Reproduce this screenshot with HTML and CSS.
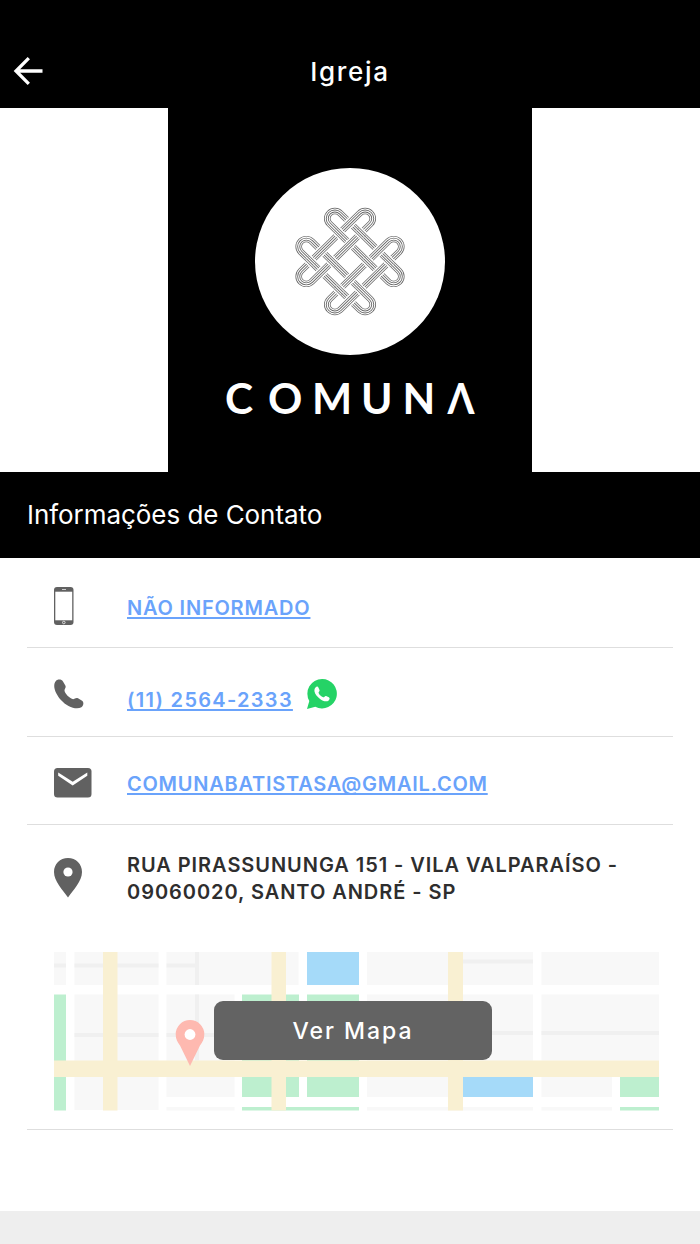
FILE: index.html
```html
<!DOCTYPE html>
<html lang="pt-BR">
<head>
  <meta charset="UTF-8" />
  <meta name="viewport" content="width=device-width, initial-scale=1.0"/>
  <title>Igreja</title>
  <link rel="stylesheet" href="styles.css">
</head>
<body>

  <header class="header">
    <a class="back" href="#" aria-label="Voltar">
      <svg width="30" height="30" viewBox="0 0 30 30">
        <path d="M15.800 1.200 3 14l12.800 12.800M3 14h26.500" fill="none" stroke="#fff" stroke-width="3.300"/>
      </svg>
    </a>
    <h1>Igreja</h1>
  </header>

  <!-- Logo -->
  <div class="hero">
    <svg class="logo" width="364" height="364" viewBox="0.5 0 364 364">
      <defs>
        <g id="ovalH">
          <rect x="-49.700" y="-28.100" width="99.400" height="15.400" rx="7.700"/>
          <rect x="-49.700" y="12.700" width="99.400" height="15.400" rx="7.700"/>
        </g>
        <g id="ovals">
          <use href="#ovalH" stroke="#fff" stroke-width="9.600"/>
          <use href="#ovalH" stroke="#666" stroke-width="6.600"/>
          <use href="#ovalH" stroke="#fff" stroke-width="5.100"/>
          <use href="#ovalH" stroke="#666" stroke-width="3"/>
          <use href="#ovalH" stroke="#fff" stroke-width="1.200"/>
        </g>
        <clipPath id="over">
          <path d="M-17.700-33.100h10v10h-10zM23.100-33.100h10v10h-10zM-33.100-17.700h10v10h-10zM7.700-17.700h10v10h-10zM-17.700 7.700h10v10h-10zM23.100 7.700h10v10h-10zM-33.100 23.100h10v10h-10zM7.700 23.100h10v10h-10z"/>
        </clipPath>
      </defs>
      <ellipse cx="182.500" cy="153.500" rx="95" ry="93.500" fill="#fff"/>
      <g transform="translate(182.500 153.500) scale(.99 .975) rotate(45)" fill="none">
        <use href="#ovals"/>
        <use href="#ovals" transform="rotate(90)"/>
        <g clip-path="url(#over)"><use href="#ovals"/></g>
      </g>
      <g class="brand">
        <text x="57.500 100.500 144.500 193.500 235" y="305.500">COMUN</text>
        <text x="280" y="305.500" textLength="27" lengthAdjust="spacingAndGlyphs">Λ</text>
      </g>
    </svg>
  </div>

  <h2>Informações de Contato</h2>

  <main class="contacts">
    <div class="row row-mobile">
      <span class="icon">
        <svg width="20" height="38" viewBox="0 0 20 38">
          <rect width="19.500" height="38" rx="3" fill="#616161"/>
          <path d="M1.300 4.700h16.900v28.600H1.300z" fill="#fff"/>
          <path d="M8 2.500h4" stroke="#ccc"/>
          <circle cx="9.800" cy="35.500" r="1.300" fill="none" stroke="#ddd"/>
        </svg>
      </span>
      <a href="#">NÃO INFORMADO</a>
    </div>

    <div class="row row-phone">
      <span class="icon">
        <svg width="30" height="30" viewBox="0 0 30 30">
          <path d="M1.500 2.500C3 .2 7.300-.2 9 2.500l2.200 3.700c1.400 2.300-.8 3.400-.7 5.400.2 2.900 5.200 8 8 8.500 2.100.4 3.200-2 5.500-.8l3.700 2.200c2.500 1.500 2 5-.3 6.700C22 31.500 12.300 27 7.200 21.200 2 15.400-1.900 7.500 1.500 2.500z" fill="#616161"/>
        </svg>
      </span>
      <a href="tel:1125642333">(11) 2564-2333</a>
      <svg class="whats" width="30" height="30" viewBox="0 0 30 30">
        <path d="M15 0A14.700 14.700 0 1 1 8.300 27.700L0 30l2.300-8A14.700 14.700 0 0 1 15 0z" fill="#25d366"/>
        <path d="M8.500 8.500c1.300-1.400 2.400-1.200 3 .3l1 2.300c.6 1.400-1.300 1.900-.9 2.900.9 2 2.400 3.400 4.600 4.300 1 .4 1.700-1.900 2.900-1.300l2.700 1.300c1.300.6.9 2.300-.1 3.100-2.400 2-6 .4-8.600-1.500-2.700-2-5.200-5-5.600-7.500-.2-1.500.1-3 1-3.900z" fill="#fff"/>
      </svg>
    </div>

    <div class="row row-mail">
      <span class="icon">
        <svg width="38" height="30" viewBox="0 0 38 30">
          <rect width="37.500" height="29.500" rx="3.500" fill="#616161"/>
          <path d="M4.200 4.500v3.300l14.500 9.700 14.600-9.700V4.500l-14.600 9.300z" fill="#fff"/>
        </svg>
      </span>
      <a href="mailto:comunabatistasa@gmail.com">COMUNABATISTASA@GMAIL.COM</a>
    </div>

    <div class="place">
      <div class="address">
        <span class="icon">
          <svg width="28" height="40" viewBox="0 0 28 40">
            <path d="M14 0C6 0 0 6 0 13.900 0 23 8.500 31.500 14 39.500 19.500 31.500 28 23 28 13.900 28 6 22 0 14 0z" fill="#616161"/>
            <circle cx="14" cy="14" r="4.600" fill="#fff"/>
          </svg>
        </span>
        <p>RUA PIRASSUNUNGA 151 - VILA VALPARAÍSO -<br>09060020, SANTO ANDRÉ - SP</p>
      </div>

      <div class="map">
        <svg width="605" height="159" viewBox="0 0.5 605 159">
          <!-- blocks -->
          <path fill="#f8f8f8" d="M0 0h12v33.500H0zM20.500 0h84v33.500h-84zM112.500 0h132v33.500h-132zM313 0h166v33.500H313zM487.500 0H605v33.500H487.500zM20.500 43h84v115.500h-84zM112.500 43h68v102.500h-68zM112.500 155.500h68v3.500h-68zM313 43h166v102.500H313zM313 155.500h166v3.500H313zM487.500 43H605v66H487.500zM487.500 125h70.500v20.500h-70.500zM487.500 155.500h70.500v3.500h-70.500z"/>
          <path fill="#f0f0f0" d="M0 12h12v4H0zM20.500 12h84v4h-84zM112.500 12H141v4h-28.500zM141 0h4v33.500h-4zM141 43h4v66h-4zM20.500 81.500h84v4h-84zM112.500 81.500h68v4h-68zM408 8h71v4h-71zM408 79.500h71v4h-71zM487.500 79.500H605v4H487.500z"/>
          <path fill="#bdefcf" d="M0 43h12v116H0zM188 43h57v102.500h-57zM188 155.500h117v3.500H188zM253 43h52v102.500h-52zM566 125h39v20.500h-39zM566 155.500h39v3.500h-39z"/>
          <path fill="#a5daf9" d="M253 0h52v33.500h-52zM409 125h70v20.500h-70z"/>
          <!-- roads -->
          <path fill="#f9f0d2" d="M49 0h14.500v159H49zM217.500 0H232v159h-14.500zM394 0h15v159h-15zM0 109h605v16.500H0z"/>
          <path fill="#feb9b0" d="M136 68.500a14.300 14.300 0 0 0-14.300 14.300c0 5 1.800 8 4.300 11.300l10 20.400 10-20.400c2.500-3.300 4.300-6.300 4.300-11.300A14.300 14.300 0 0 0 136 68.500z"/>
          <circle cx="136" cy="83" r="5.400" fill="#fff"/>
        </svg>
        <button type="button">Ver Mapa</button>
      </div>
    </div>
  </main>

  <footer class="footer"></footer>

</body>
</html>
```

FILE: styles.css
```css
* {
  box-sizing: border-box;
}

body {
  font-family: Inter, "Liberation Sans", sans-serif;
  margin: 0;
  background-color: #fff;
  color: #2e2e2e;
  height: 1244px;
  display: flex;
  flex-direction: column;
}

svg {
  display: block;
}

.header {
  height: 108px;
  padding: 35px 13px 0;
  background-color: #000;
  color: #fff;
  display: grid;
  grid-template-columns: 30px 1fr 30px;
  align-items: center;
}

h1 {
  margin: 0;
  font-size: 26px;
  font-weight: 550;
  letter-spacing: 1.7px;
  text-align: center;
}

.hero {
  height: 364px;
  display: flex;
  justify-content: center;
}

.logo {
  background-color: #000;
}

.brand {
  font-family: Lato, sans-serif;
  font-size: 42.5px;
  font-weight: 700;
  fill: #fff;
}

h2 {
  margin: 0;
  height: 86px;
  padding-left: 27px;
  background-color: #000;
  color: #fff;
  font-size: 26px;
  font-weight: 400;
  letter-spacing: -0.05px;
  line-height: 86px;
}

.contacts {
  margin: 0 27px;
  font-size: 20px;
  font-weight: 600;
  letter-spacing: 0.8px;
}

.row {
  height: 90px;
  padding: 7px 0 0 27px;
  border-bottom: 1px solid #dedede;
  display: flex;
  align-items: center;
}

.row-phone,
.row-mail {
  height: 88.5px;
  padding-top: 5px;
}

.icon {
  width: 73px;
  flex: none;
}

a {
  color: #6aa3fb;
  text-decoration-thickness: 1.5px;
  text-underline-offset: 2px;
  text-decoration-skip-ink: none;
}

.row-mobile a {
  padding-top: 4px;
}

.row-phone a {
  padding-top: 12px;
  letter-spacing: 1.3px;
}

.row-mail a {
  padding-top: 2px;
  letter-spacing: 0.75px;
}

.whats {
  margin-left: 14px;
}

.place {
  height: 305px;
  padding: 27px 13px 0 27px;
  border-bottom: 1px solid #dedede;
}

.address {
  height: 100px;
  display: flex;
}

.address .icon {
  padding-top: 6px;
}

.address p {
  margin: 0;
  letter-spacing: 0.95px;
  line-height: 27px;
  white-space: nowrap;
}

.map {
  position: relative;
}

.map button {
  position: absolute;
  left: 160px;
  top: 49px;
  width: 278px;
  height: 59px;
  padding: 0;
  border: none;
  border-radius: 9px;
  background-color: #636363;
  color: #fff;
  font-family: inherit;
  font-size: 23px;
  font-weight: 550;
  letter-spacing: 2px;
}

.footer {
  height: 33px;
  margin-top: auto;
  background-color: #eee;
}
```
